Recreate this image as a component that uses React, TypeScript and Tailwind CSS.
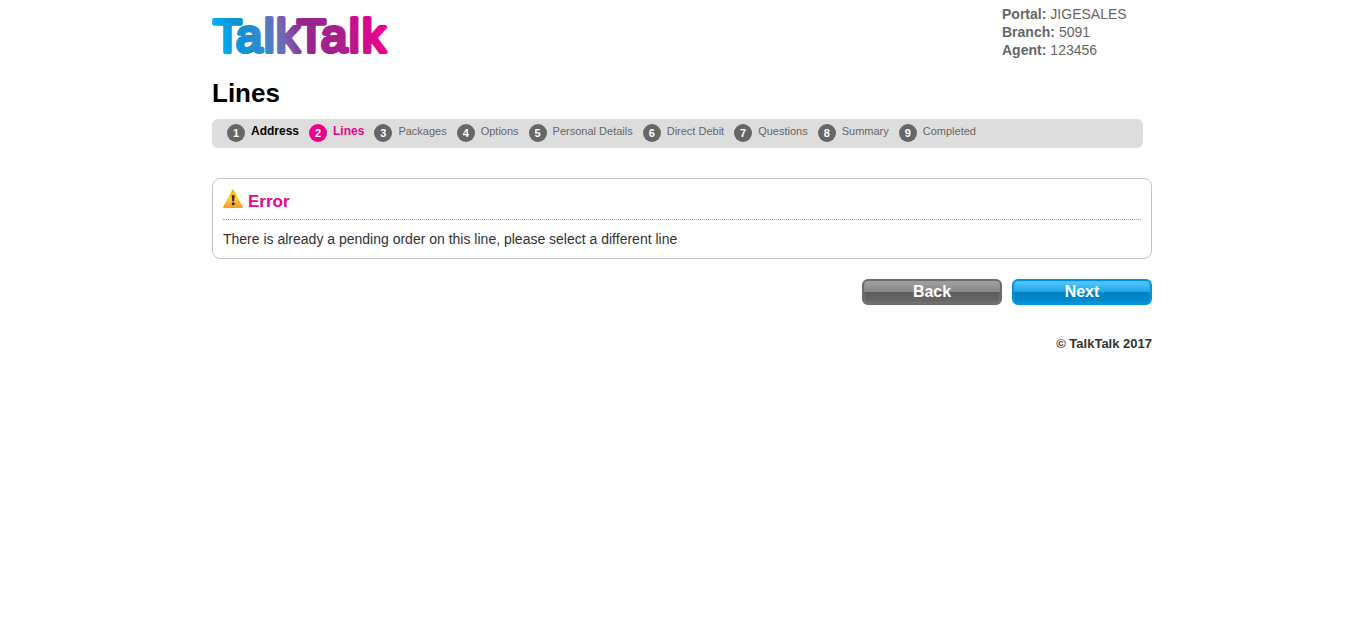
const steps = [
  "Address",
  "Lines",
  "Packages",
  "Options",
  "Personal Details",
  "Direct Debit",
  "Questions",
  "Summary",
  "Completed",
];

const current = 1;

const agentDetails = [
  { label: "Portal", value: "JIGESALES" },
  { label: "Branch", value: "5091" },
  { label: "Agent", value: "123456" },
];

function Logo() {
  return (
    <svg className="h-14 w-[184px]" viewBox="0 0 184 56" role="img" aria-label="TalkTalk">
      <defs>
        <linearGradient id="brand" gradientUnits="userSpaceOnUse" x1="12" y1="48" x2="164" y2="8">
          <stop offset="0" stopColor="#00aeef" />
          <stop offset="0.12" stopColor="#0a93d6" />
          <stop offset="0.28" stopColor="#3d86ca" />
          <stop offset="0.4" stopColor="#7565b0" />
          <stop offset="0.52" stopColor="#92278f" />
          <stop offset="0.76" stopColor="#ab1e8c" />
          <stop offset="1" stopColor="#ec008c" />
        </linearGradient>
      </defs>
      <text
        x="1 24 52 64 85 109 137 150"
        y="44"
        fontSize="47"
        fill="url(#brand)"
        stroke="url(#brand)"
        strokeWidth="4.2"
        strokeLinejoin="round"
        className="font-['Liberation_Sans',Arial,sans-serif]"
      >
        TalkTalk
      </text>
    </svg>
  );
}

function WarningIcon() {
  return (
    <svg className="mt-px h-5 w-5 shrink-0" viewBox="0 0 20 20" aria-hidden="true">
      <defs>
        <linearGradient id="warn" x1="0" y1="0" x2="0" y2="1">
          <stop offset="0" stopColor="#f3b900" />
          <stop offset="0.5" stopColor="#ffd21f" />
          <stop offset="0.62" stopColor="#fdb93a" />
          <stop offset="1" stopColor="#f9a01b" />
        </linearGradient>
      </defs>
      <path d="M10 1.2 L19.2 18.3 H0.8 Z" fill="url(#warn)" stroke="url(#warn)" strokeWidth="1.4" strokeLinejoin="round" />
      <path d="M8.7 6.2 h3 l-0.6 6 h-1.8 Z" fill="#2d2d2d" />
      <circle cx="10.2" cy="14.8" r="1.5" fill="#2d2d2d" />
    </svg>
  );
}

export default function App() {
  return (
    <div className="mx-auto max-w-[940px] bg-white font-['Liberation_Sans',Arial,sans-serif] text-[#333]">
      <header className="flex items-start justify-between pt-[5px]">
        <a href="#" className="mt-[3px] block">
          <Logo />
        </a>
        <dl className="w-[150px] text-sm leading-[18px] text-[#666]">
          {agentDetails.map(({ label, value }) => (
            <div key={label} className="flex gap-1">
              <dt className="font-bold">{label}:</dt>
              <dd>{value}</dd>
            </div>
          ))}
        </dl>
      </header>

      <main>
        <h1 className="mt-[13px] text-[26px] leading-8 font-bold text-black">Lines</h1>

        <nav aria-label="Order progress" className="mt-[10px] mr-[9px] rounded-md bg-[#ddd] px-[15px] pt-[5px] pb-[6px]">
          <ol className="flex gap-[10px] text-[11px] leading-[14px] text-[#666]">
            {steps.map((step, i) => (
              <li
                key={step}
                aria-current={i === current ? "step" : undefined}
                className={
                  i === current
                    ? "flex gap-[6px] text-xs leading-[14px] font-bold text-[#ec008c]"
                    : i < current
                      ? "flex gap-[6px] text-xs leading-[14px] font-bold text-black"
                      : "flex gap-[6px]"
                }
              >
                <span
                  className={
                    i === current
                      ? "flex size-[18px] items-center justify-center rounded-full bg-[#ec008c] text-[11px] font-bold text-white"
                      : "flex size-[18px] items-center justify-center rounded-full bg-[#666] text-[11px] font-bold text-white"
                  }
                >
                  {i + 1}
                </span>
                {step}
              </li>
            ))}
          </ol>
        </nav>

        <section role="alert" className="mt-[30px] rounded-lg border border-[#c4c4c4] px-[10px] py-[9px]">
          <h2 className="flex gap-[5px] border-b border-dotted border-[#aaa] pb-[5px] text-[17px] font-bold text-[#ec008c]">
            <WarningIcon />
            <span className="pt-[2px] leading-6">Error</span>
          </h2>
          <p className="mt-[9px] text-sm leading-5">
            There is already a pending order on this line, please select a different line
          </p>
        </section>

        <div className="mt-5 flex justify-end gap-[10px]">
          <button
            type="button"
            className="h-[26px] w-[140px] rounded-md border-2 border-[#6d6d6d] bg-[linear-gradient(#a3a3a3_0%,#858585_50%,#5c5c5c_50%,#6a6a6a_100%)] text-base leading-[22px] font-bold text-white shadow-[inset_0_0_2px_#8a8a8a]"
          >
            Back
          </button>
          <button
            type="button"
            className="h-[26px] w-[140px] rounded-md border-2 border-[#0095da] bg-[linear-gradient(#5ac8fc_0%,#1ba6ea_50%,#007fbd_50%,#008ed3_100%)] text-base leading-[22px] font-bold text-white shadow-[inset_0_0_2px_#1fa8ec]"
          >
            Next
          </button>
        </div>
      </main>

      <footer className="mt-[31px] text-right text-[13px] leading-4 font-bold">© TalkTalk 2017</footer>
    </div>
  );
}
